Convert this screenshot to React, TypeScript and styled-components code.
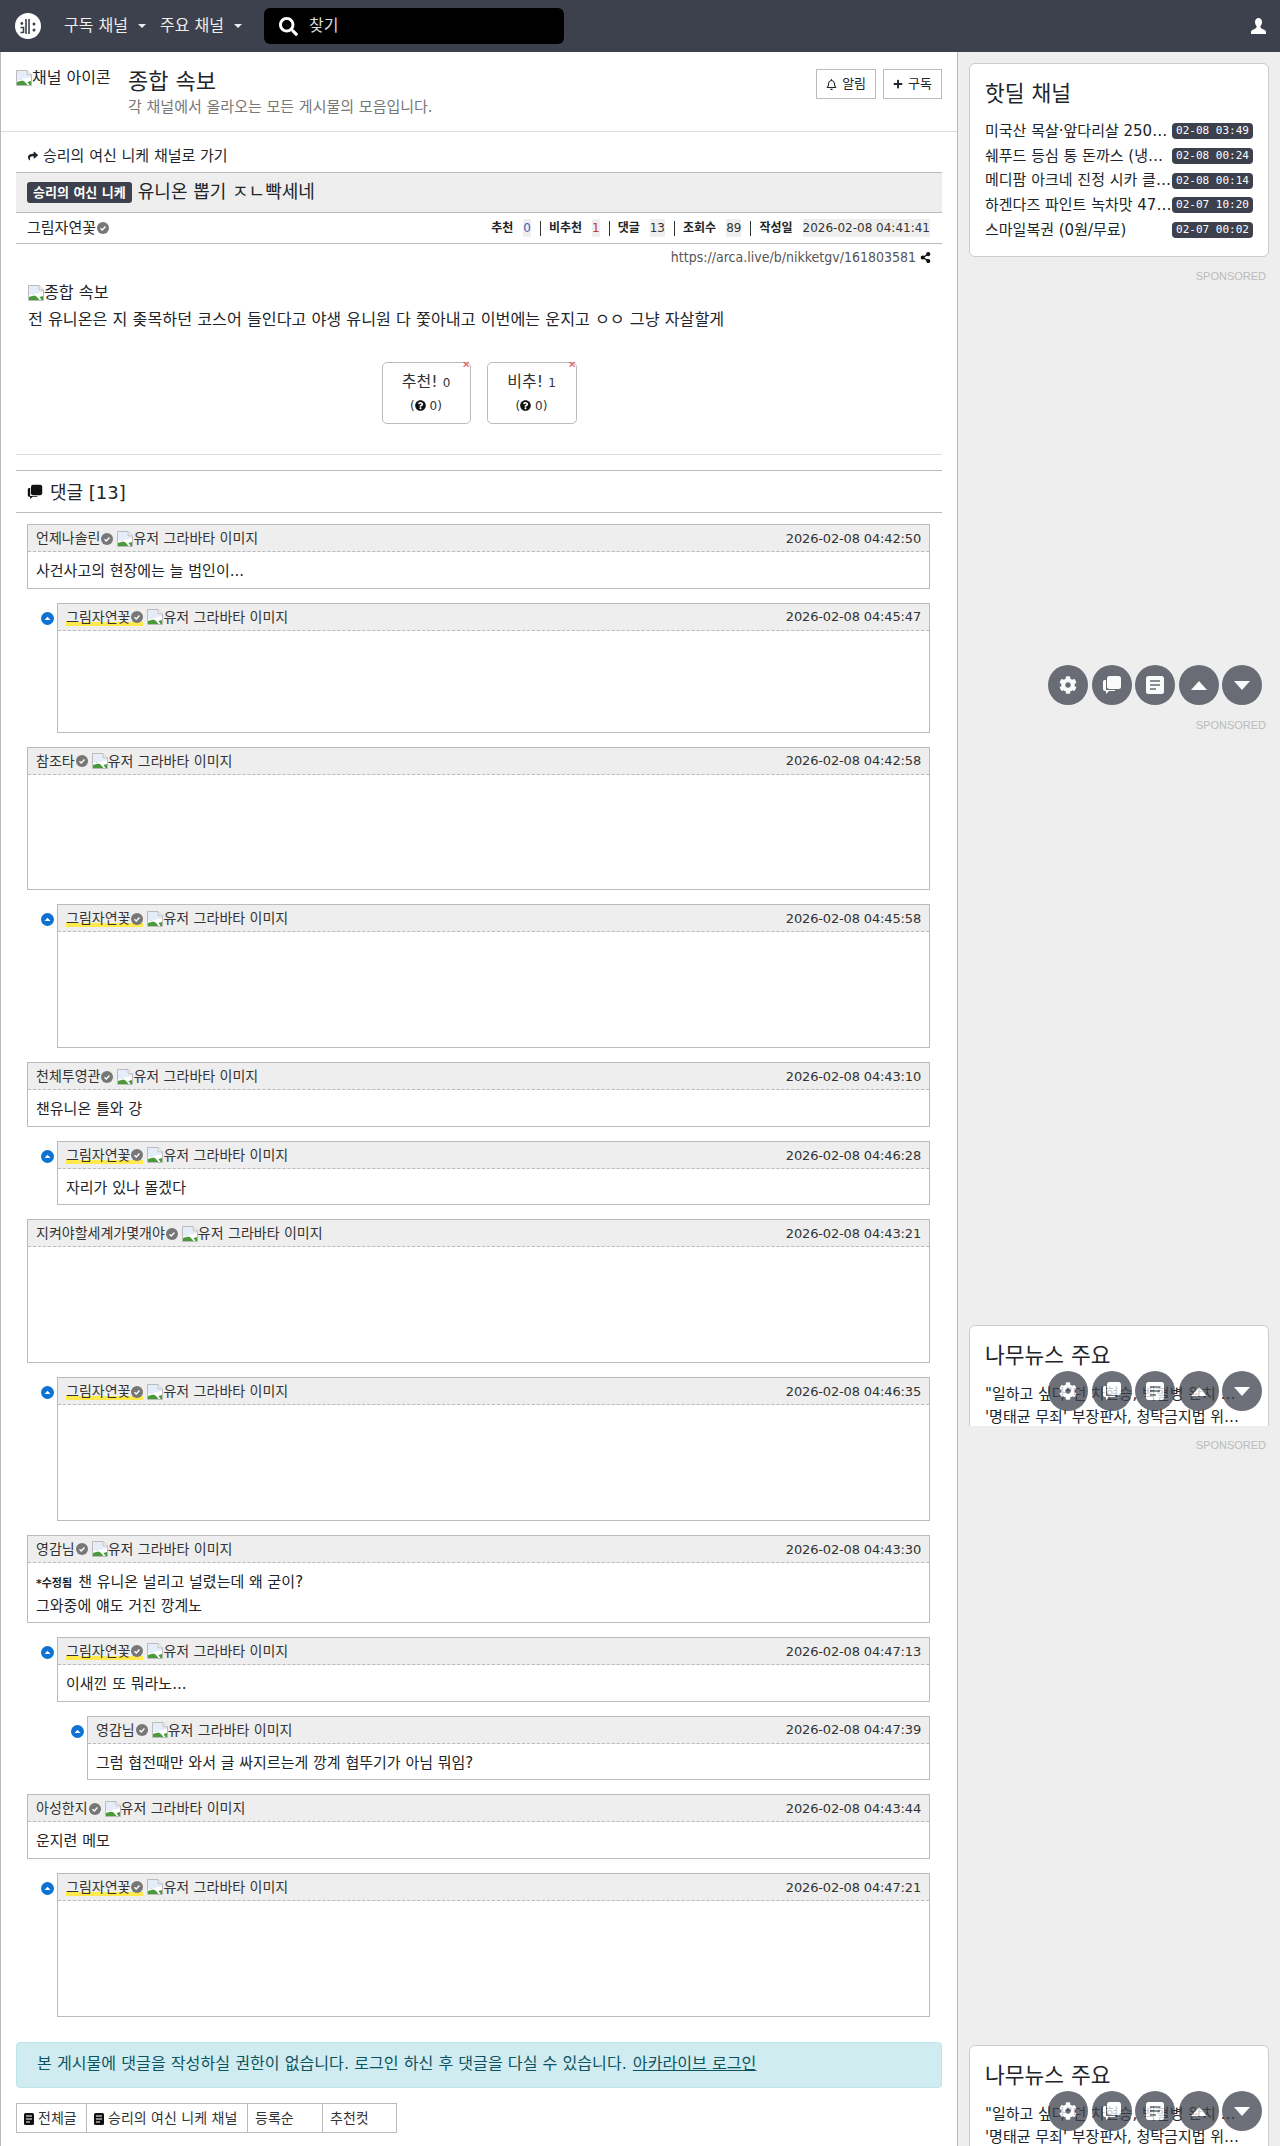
import React from "react";
import styled, { createGlobalStyle } from "styled-components";
import { FaSearch, FaShareAlt, FaShare, FaCog, FaRegBell, FaPlus, FaQuestionCircle } from "react-icons/fa";

const Global = createGlobalStyle`
  html, body { margin: 0; padding: 0; background: #fff; }
  body { font-family: "DejaVu Sans", "Noto Sans CJK KR", sans-serif; font-size: 15px; color: #212529; line-height: 1.5; }
  * { box-sizing: border-box; }
`;

const Page = styled.div`position: relative; width: 1280px; height: 2146px; overflow: hidden;`;
const Nav = styled.header`height: 52px; background: #3d414d; display: flex; align-items: center; padding: 0 15px; color: #fff;`;
const Logo = styled.svg`width: 26px; height: 26px; flex: none; margin-right: 23px;`;
const NavItem = styled.span`display: inline-flex; align-items: center; font-size: 16px; color: #eee; margin-right: 14px;
  &::after { content: ""; margin-left: 10px; border-top: 4px solid #eee; border-left: 4px solid transparent; border-right: 4px solid transparent; }`;
const Search = styled.div`width: 300px; height: 36px; margin-left: 8px; background: #000; border-radius: 6px; display: flex; align-items: center; padding-left: 15px; color: #ddd; font-size: 16px; gap: 11px;
  svg { color: #fff; font-size: 19px; }`;
const NavUser = styled.svg`margin-left: auto; width: 15px; height: 16px; margin-right: -1px;`;

const Body = styled.div`display: flex; height: 2094px;`;
const Main = styled.main`width: 958px; flex: none; border-left: 1px solid #bbb; border-right: 1px solid #bbb; background: #fff;`;
const Side = styled.aside`flex: 1; background: #eee; padding: 11px 11px 0;`;

const ChannelHead = styled.section`height: 80px; border-bottom: 1px solid #ddd; display: flex; padding: 18px 15px 0;`;
const ChannelIcon = styled.span`width: 95px; height: 16px; overflow: hidden; display: flex; align-items: flex-start; line-height: 16px; white-space: nowrap; font-size: 16px; color: #212529; margin-right: 17px;`;
const ChannelText = styled.div`flex: 1; margin-top: -1px;`;
const ChannelTitle = styled.h1`margin: 0; font-size: 22px; font-weight: 400; line-height: 26px; color: #212529;`;
const ChannelDesc = styled.p`margin: 0; font-size: 15px; color: #777; line-height: 24px;`;
const HeadBtns = styled.div`display: flex; gap: 7px; margin-top: -1px;`;
const HeadBtn = styled.span`height: 30px; padding: 0 9px; border: 1px solid #bbb; background: #fff; display: inline-flex; align-items: center; gap: 5px; font-size: 13px; color: #212529;`;

const Article = styled.article`padding: 0 15px;`;
const GoBack = styled.div`height: 40px; display: flex; align-items: flex-end; padding: 0 0 5px 12px; gap: 5px; font-size: 15px; line-height: 22px;
  svg { font-size: 10px; margin-bottom: 6px; }`;
const TitleBar = styled.div`height: 41px; background: #eee; border-top: 1px solid #bbb; border-bottom: 1px solid #bbb; display: flex; align-items: center; padding: 0 0 2px 11px; gap: 6px; font-size: 18px;`;
const Badge = styled.span`background: #3d414d; color: #fff; font-size: 13px; font-weight: 700; border-radius: 3px; height: 21px; line-height: 21px; padding: 0 6px; margin-top: 2px;`;
const Meta = styled.div`height: 31px; border-bottom: 1px solid #bbb; display: flex; align-items: center; justify-content: space-between; padding: 0 12px 0 11px; font-size: 15px;`;
const Author = styled.span`display: inline-flex; align-items: center; gap: 1px;`;
const Stats = styled.div`display: flex; align-items: center; font-size: 12px;`;
const StatLabel = styled.b`font-weight: 700; margin-right: 10px;`;
const StatValue = styled.span<{ $color?: string }>`background: #eee; color: ${p => p.$color || "#333"}; font-size: 12px; line-height: 18px;`;
const StatSep = styled.i`width: 1px; height: 15px; background: #333; margin: 0 8px 0 9px;`;
const UrlRow = styled.div`height: 27px; display: flex; align-items: center; justify-content: flex-end; padding-right: 11px; gap: 4px; font-size: 14px; font-stretch: condensed; color: #555;
  svg { color: #111; font-size: 11px; }`;
const Content = styled.div`padding: 8px 12px 0; font-size: 16.16px; line-height: 27px; color: #212529;`;
const ContentImg = styled.div`display: flex; align-items: center;`;
const Votes = styled.div`display: flex; justify-content: center; gap: 16px; margin-top: 29px;`;
const VoteBtn = styled.div<{ $w: number }>`position: relative; width: ${p => p.$w}px; height: 62px; border: 1px solid #bbb; border-radius: 5px; text-align: center; font-size: 16px; padding-top: 7px; line-height: 24px; color: #333;`;
const VoteClose = styled.span`position: absolute; top: -4px; right: -1px; color: #d9534f; font-size: 10px; line-height: 12px; font-weight: 700;`;
const VoteNum = styled.small`font-size: 12px;`;
const VoteSub = styled.div`font-size: 12px; line-height: 22px; svg { font-size: 11px; color: #111; vertical-align: -1px; }`;

const Rule = styled.hr<{ $color: string; $mt: number }>`border: 0; margin: ${p => p.$mt}px 0 0; height: 1px; background: ${p => p.$color};`;
const CmtHead = styled.h3`margin: 0; height: 42px; border-bottom: 1px solid #bbb; display: flex; align-items: center; gap: 7px; padding: 1px 0 0 11px; font-size: 18px; font-weight: 400;`;
const CmtList = styled.div`padding: 11px 12px 0 11px;`;
const Cmt = styled.div<{ $depth: number }>`position: relative; margin-left: ${p => p.$depth * 30}px; margin-bottom: 14px; border: 1px solid #bbb;`;
const CmtTop = styled.div`height: 27px; background: #eee; border-bottom: 1px dashed #bbb; display: flex; align-items: center; justify-content: space-between; padding: 1px 8px 0; font-size: 13px;`;
const CmtWho = styled.div`display: flex; align-items: center;`;
const CmtName = styled.span<{ $me?: boolean }>`display: inline-flex; align-items: center; gap: 1px; font-size: 14px; margin-right: 4px; color: #333;
  ${p => p.$me ? "background: linear-gradient(transparent 70%, #ffe94d 70%, #ffe94d 90%, transparent 90%);" : ""}`;
const CmtAlt = styled.span`display: inline-flex; align-items: center; font-size: 14px; color: #333;`;
const CmtTime = styled.span`font-size: 13px; letter-spacing: -0.15px; color: #333;`;
const CmtBody = styled.div<{ $h: number }>`height: ${p => p.$h}px; padding: 8px 8px 0; font-size: 15px; line-height: 23px; color: #212529;`;
const Edited = styled.b`font-size: 11px; font-weight: 700; margin-right: 6px;`;
const ReplyDot = styled.svg`position: absolute; left: -17px; top: 8px; width: 13px; height: 13px;`;

const Alert = styled.div`margin-top: 25px; height: 46px; background: #d1ecf1; border: 1px solid #bee5eb; border-radius: 4px; color: #0c5460; font-size: 16.1px; display: flex; align-items: center; padding-left: 20px; gap: 6px;
  u { color: #0c5460; }`;
const Tabs = styled.div`display: flex; margin-top: 15px;`;
const Tab = styled.span<{ $w: number }>`width: ${p => p.$w}px; height: 30px; border: 1px solid #bbb; margin-right: -1px; display: flex; align-items: center; gap: 4px; padding: 2px 0 0 7px; font-size: 14px; color: #333;`;
const TabIcon = styled.svg`width: 10px; height: 12px;`;

const Card = styled.section`background: #fff; border: 1px solid #ccc; border-radius: 6px; padding: 15px 15px 14px;`;
const CardTitle = styled.h4`margin: 0 0 10px; font-size: 21.5px; font-weight: 400; line-height: 30px; color: #212529;`;
const HotRow = styled.div`display: flex; align-items: center; justify-content: space-between; height: 24.7px; font-size: 15px;`;
const HotText = styled.span`width: 187px; white-space: nowrap; overflow: hidden; text-overflow: ellipsis;`;
const HotTime = styled.span`background: #3d414d; color: #fff; border-radius: 4px; height: 16px; line-height: 16px; width: 81px; text-align: center; font-family: "DejaVu Sans Mono", monospace; font-size: 11px;`;
const Sponsored = styled.div<{ $mt: number }>`margin-top: ${p => p.$mt}px; text-align: right; font-family: "Liberation Sans", sans-serif; font-size: 11px; line-height: 14px; color: #bbb; padding-right: 3px;`;
const ClipCard = styled.div<{ $h: number; $mt: number }>`height: ${p => p.$h}px; margin-top: ${p => p.$mt}px; overflow: hidden;`;
const NewsList = styled.div`padding-top: 2px;`;
const NewsRow = styled.div`font-size: 15px; line-height: 23px; white-space: nowrap; overflow: hidden; text-overflow: ellipsis; width: 260px;`;

const Float = styled.div<{ $top: number }>`position: absolute; top: ${p => p.$top}px; left: 1048px; display: flex; gap: 3.5px;`;
const FloatBtn = styled.span`width: 40px; height: 40px; border-radius: 50%; background: #3d414d; opacity: 0.75; color: #fff; display: flex; align-items: center; justify-content: center; font-size: 18px;`;

const Broken = () => (
  <svg width="16" height="16" viewBox="0 0 16 16" style={{ flex: "none" }}>
    <path d="M.5 .5H11L15.5 5V15.5H.5Z" fill="#fff" stroke="#bbb" />
    <path d="M11 .5V5H15.5" fill="#eee" stroke="#bbb" />
    <path d="M1 1H10V5L11 6H15V8L1 10Z" fill="#e4edf9" />
    <path d="M1 15V12L5 9L9 12L11.5 15Z" fill="#4a9a3c" />
    <path d="M11.5 12L15 11V15H13.5Z" fill="#4a9a3c" />
    <path d="M1 11L15 8" stroke="#fff" strokeWidth="1.5" />
  </svg>
);
const Check = () => (
  <svg width="12" height="12" viewBox="0 0 13 13" style={{ flex: "none" }}>
    <circle cx="6.5" cy="6.5" r="6.5" fill="#777" />
    <path d="M3.8 6.8L5.7 8.6L9.2 4.8" fill="none" stroke="#fff" strokeWidth="1.5" />
  </svg>
);
const Doc = () => (
  <TabIcon viewBox="0 0 10 12"><rect width="10" height="12" rx="1.5" fill="#111" /><path d="M2 3H8M2 6H8M2 9H6" stroke="#fff" strokeWidth="1.2" /></TabIcon>
);
const Chat = ({ size = 16, color = "#fff" }: { size?: number; color?: string }) => (
  <svg width={size} height={size} viewBox="0 0 20 20">
    <rect x="5" y="1" width="14" height="13" rx="2.5" fill={color} />
    <path d="M3.5 5H4V15H13V16H7L4 19V16H3A2 2 0 0 1 1 14V7A2 2 0 0 1 3.5 5Z" fill={color} />
  </svg>
);
const Tri = ({ down }: { down?: boolean }) => (
  <svg width="16" height="9" viewBox="0 0 16 9"><path d={down ? "M0 0H16L8 9Z" : "M0 9H16L8 0Z"} fill="#fff" /></svg>
);

type C = { name: string; time: string; depth?: number; me?: boolean; h: number; text?: React.ReactNode };
const me = "그림자연꽃";
const comments: C[] = [
  { name: "언제나솔린", time: "2026-02-08 04:42:50", h: 35.7, text: "사건사고의 현장에는 늘 범인이..." },
  { name: me, me: true, depth: 1, time: "2026-02-08 04:45:47", h: 101 },
  { name: "참조타", time: "2026-02-08 04:42:58", h: 114.7 },
  { name: me, me: true, depth: 1, time: "2026-02-08 04:45:58", h: 114.7 },
  { name: "천체투영관", time: "2026-02-08 04:43:10", h: 35.7, text: "챈유니온 틀와 걍" },
  { name: me, me: true, depth: 1, time: "2026-02-08 04:46:28", h: 35.7, text: "자리가 있나 몰겠다" },
  { name: "지켜야할세계가몇개야", time: "2026-02-08 04:43:21", h: 114.7 },
  { name: me, me: true, depth: 1, time: "2026-02-08 04:46:35", h: 114.7 },
  { name: "영감님", time: "2026-02-08 04:43:30", h: 59, text: <><Edited>*수정됨</Edited>챈 유니온 널리고 널렸는데 왜 굳이?<br />그와중에 얘도 거진 깡계노</> },
  { name: me, me: true, depth: 1, time: "2026-02-08 04:47:13", h: 35.7, text: "이새낀 또 뭐라노..." },
  { name: "영감님", depth: 2, time: "2026-02-08 04:47:39", h: 35.7, text: "그럼 협전때만 와서 글 싸지르는게 깡계 협뚜기가 아님 뭐임?" },
  { name: "아성한지", time: "2026-02-08 04:43:44", h: 35.7, text: "운지련 메모" },
  { name: me, me: true, depth: 1, time: "2026-02-08 04:47:21", h: 114.7 },
];
const hot = [
  ["미국산 목살·앞다리살 2500g 특가 모음", "02-08 03:49"],
  ["쉐푸드 등심 통 돈까스 (냉동) 특가 모음", "02-08 00:24"],
  ["메디팜 아크네 진정 시카 클렌저 특가", "02-08 00:14"],
  ["하겐다즈 파인트 녹차맛 473ml 특가", "02-07 10:20"],
  ["스마일복권 (0원/무료)", "02-07 00:02"],
];

const FloatBar = ({ top }: { top: number }) => (
  <Float $top={top}>
    <FloatBtn><FaCog /></FloatBtn>
    <FloatBtn><Chat size={20} /></FloatBtn>
    <FloatBtn>
      <svg width="20" height="20" viewBox="0 0 20 20"><rect x="1" y="1" width="18" height="18" rx="2.5" fill="#fff" /><path d="M5 6H15M5 10H15M5 14H11" stroke="#6c6e78" strokeWidth="1.8" /></svg>
    </FloatBtn>
    <FloatBtn><Tri /></FloatBtn>
    <FloatBtn><Tri down /></FloatBtn>
  </Float>
);

const NewsCard = () => (
  <Card>
    <CardTitle>나무뉴스 주요</CardTitle>
    <NewsList>
      <NewsRow>"일하고 싶다"던 차현승, 백혈병 완치 후 복귀 소식</NewsRow>
      <NewsRow>'명태균 무죄' 부장판사, 청탁금지법 위반 혐의 송치</NewsRow>
    </NewsList>
  </Card>
);

export default function App() {
  return (
    <Page>
      <Global />
      <Nav>
        <Logo viewBox="0 0 26 26">
          <circle cx="13" cy="13" r="13" fill="#fff" />
          <path d="M11 6V21M14 6V21M5.5 14.5H8.5V20M5.5 19.5H8" stroke="#3d414d" strokeWidth="1.6" fill="none" />
          <circle cx="6.8" cy="10.5" r="1.4" fill="#3d414d" />
          <circle cx="19" cy="11" r="1.5" fill="#3d414d" /><circle cx="19" cy="17" r="1.5" fill="#3d414d" />
        </Logo>
        <NavItem>구독 채널</NavItem>
        <NavItem>주요 채널</NavItem>
        <Search><FaSearch />찾기</Search>
        <NavUser viewBox="0 0 15 16"><path d="M7.5 0C5.3 0 4 1.7 4 4C4 5.8 4.8 7.2 5.6 8.2C5.8 9.6 5 10.2 3.5 11C2 11.7 .4 12.4 0 13.5V16H15V13.5C14.6 12.4 13 11.7 11.5 11C10 10.2 9.2 9.6 9.4 8.2C10.2 7.2 11 5.8 11 4C11 1.7 9.7 0 7.5 0Z" fill="#fff" /></NavUser>
      </Nav>
      <Body>
        <Main>
          <ChannelHead>
            <ChannelIcon><Broken />채널 아이콘</ChannelIcon>
            <ChannelText>
              <ChannelTitle>종합 속보</ChannelTitle>
              <ChannelDesc>각 채널에서 올라오는 모든 게시물의 모음입니다.</ChannelDesc>
            </ChannelText>
            <HeadBtns>
              <HeadBtn><FaRegBell size={11} />알림</HeadBtn>
              <HeadBtn><FaPlus size={10} />구독</HeadBtn>
            </HeadBtns>
          </ChannelHead>
          <Article>
            <GoBack><FaShare />승리의 여신 니케 채널로 가기</GoBack>
            <TitleBar><Badge>승리의 여신 니케</Badge>유니온 뽑기 ㅈㄴ빡세네</TitleBar>
            <Meta>
              <Author>그림자연꽃<Check /></Author>
              <Stats>
                <StatLabel>추천</StatLabel><StatValue $color="#3b5fc0">0</StatValue><StatSep />
                <StatLabel>비추천</StatLabel><StatValue $color="#c0392b">1</StatValue><StatSep />
                <StatLabel>댓글</StatLabel><StatValue>13</StatValue><StatSep />
                <StatLabel>조회수</StatLabel><StatValue>89</StatValue><StatSep />
                <StatLabel>작성일</StatLabel><StatValue>2026-02-08 04:41:41</StatValue>
              </Stats>
            </Meta>
            <UrlRow>https://arca.live/b/nikketgv/161803581<FaShareAlt /></UrlRow>
            <Content>
              <ContentImg><Broken />종합 속보</ContentImg>
              전 유니온은 지 좆목하던 코스어 들인다고 야생 유니원 다 쫓아내고 이번에는 운지고 ㅇㅇ 그냥 자살할게
              <Votes>
                <VoteBtn $w={89}><VoteClose>✕</VoteClose>추천! <VoteNum>0</VoteNum><VoteSub>(<FaQuestionCircle /> 0)</VoteSub></VoteBtn>
                <VoteBtn $w={90}><VoteClose>✕</VoteClose>비추! <VoteNum>1</VoteNum><VoteSub>(<FaQuestionCircle /> 0)</VoteSub></VoteBtn>
              </Votes>
            </Content>
            <Rule $color="#ddd" $mt={30} />
            <Rule $color="#bbb" $mt={15} />
            <CmtHead><Chat size={16} color="#111" />댓글 [13]</CmtHead>
            <CmtList>
              {comments.map((c, i) => (
                <Cmt key={i} $depth={c.depth || 0}>
                  {c.depth ? <ReplyDot viewBox="0 0 13 13"><circle cx="6.5" cy="6.5" r="6.5" fill="#0d72d2" /><path d="M3.5 8L6.5 4.8L9.5 8Z" fill="#fff" /></ReplyDot> : null}
                  <CmtTop>
                    <CmtWho>
                      <CmtName $me={c.me}>{c.name}<Check /></CmtName>
                      <CmtAlt><Broken />유저 그라바타 이미지</CmtAlt>
                    </CmtWho>
                    <CmtTime>{c.time}</CmtTime>
                  </CmtTop>
                  <CmtBody $h={c.h}>{c.text}</CmtBody>
                </Cmt>
              ))}
            </CmtList>
            <Alert>본 게시물에 댓글을 작성하실 권한이 없습니다. 로그인 하신 후 댓글을 다실 수 있습니다.<u>아카라이브 로그인</u></Alert>
            <Tabs>
              <Tab $w={71}><Doc />전체글</Tab>
              <Tab $w={162}><Doc />승리의 여신 니케 채널</Tab>
              <Tab $w={76}>등록순</Tab>
              <Tab $w={75}>추천컷</Tab>
            </Tabs>
          </Article>
        </Main>
        <Side>
          <Card>
            <CardTitle>핫딜 채널</CardTitle>
            {hot.map(([t, d]) => (
              <HotRow key={d}><HotText>{t}</HotText><HotTime>{d}</HotTime></HotRow>
            ))}
          </Card>
          <Sponsored $mt={12}>SPONSORED</Sponsored>
          <Sponsored $mt={435}>SPONSORED</Sponsored>
          <ClipCard $h={101} $mt={593}><NewsCard /></ClipCard>
          <Sponsored $mt={12}>SPONSORED</Sponsored>
          <ClipCard $h={120} $mt={593}><NewsCard /></ClipCard>
        </Side>
      </Body>
      <FloatBar top={665} />
      <FloatBar top={1371} />
      <FloatBar top={2091} />
    </Page>
  );
}
